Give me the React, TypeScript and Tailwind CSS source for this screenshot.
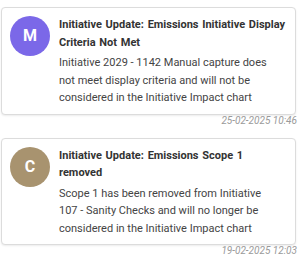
import React from "react";

type Item = { initial: string; color: string; title: string; body: string; time: string };

const items: Item[] = [
  {
    initial: "M",
    color: "bg-[#7b68e8]",
    title: "Initiative Update: Emissions Initiative Display Criteria Not Met",
    body: "Initiative 2029 - 1142 Manual capture does not meet display criteria and will not be considered in the Initiative Impact chart",
    time: "25-02-2025 10:46",
  },
  {
    initial: "C",
    color: "bg-[#a8936f]",
    title: "Initiative Update: Emissions Scope 1 removed",
    body: "Scope 1 has been removed from Initiative 107 - Sanity Checks and will no longer be considered in the Initiative Impact chart",
    time: "19-02-2025 12:03",
  },
];

export default function App() {
  return (
    <div
      className="w-[298px] h-[256px] bg-white overflow-hidden pt-[7px] pl-[1px] pr-[1px]"
      style={{ fontFamily: "Roboto, 'Liberation Sans', sans-serif" }}
    >
      {items.map((it, i) => (
        <div key={i} className="mb-[11px]">
          <div className="mr-[1px] flex gap-[9px] rounded-[4px] border border-[#dcdcdc] bg-white pt-[8px] pb-[7px] pl-[8px] pr-[9px] shadow-[0_1px_2px_rgba(0,0,0,0.08)]">
            <div
              className={`${it.color} flex h-[40px] w-[40px] shrink-0 items-center justify-center rounded-full text-[16px] font-bold text-white`}
            >
              {it.initial}
            </div>
            <div className="min-w-0 flex-1">
              <div className="mr-[1px] text-[11px] font-bold leading-[17.5px] text-[#333333] [word-spacing:1px]">{it.title}</div>
              <div className="mt-[3px] mr-[4px] text-[11px] leading-[17.5px] text-[#444444]">{it.body}</div>
            </div>
          </div>
          <div className="text-right text-[10px] italic leading-[12px] text-[#9a9a9a]">{it.time}</div>
        </div>
      ))}
    </div>
  );
}
